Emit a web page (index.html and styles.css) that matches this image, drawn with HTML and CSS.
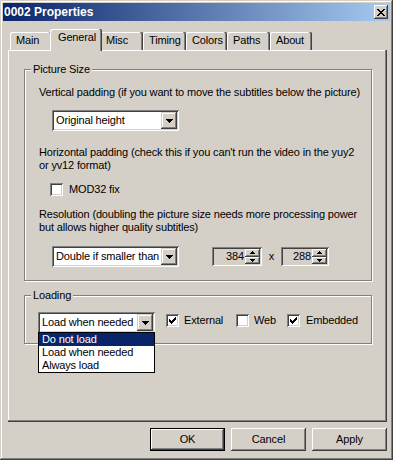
FILE: index.html
```html
<!DOCTYPE html>
<html>
<head>
<meta charset="utf-8">
<title>0002 Properties</title>
<link rel="stylesheet" href="styles.css">
</head>
<body>
<div class="window">
  <div class="titlebar">
    <span class="title">0002 Properties</span>
    <span class="close"><svg width="8" height="7" viewBox="0 0 8 7"><path fill="#000" d="M0 0h2v1h-2zM6 0h2v1h-2zM1 1h2v1h-2zM5 1h2v1h-2zM2 2h4v1h-4zM3 3h2v1h-2zM2 4h4v1h-4zM1 5h2v1h-2zM5 5h2v1h-2zM0 6h2v1h-2zM6 6h2v1h-2z"/></svg></span>
  </div>
  <div class="body">
    <div class="tabs">
      <div class="tab t-main">Main</div>
      <div class="tab t-general active">General</div>
      <div class="tab t-misc">Misc</div>
      <div class="tab t-timing">Timing</div>
      <div class="tab t-colors">Colors</div>
      <div class="tab t-paths">Paths</div>
      <div class="tab t-about">About</div>
    </div>
    <div class="panel">
      <fieldset class="group group-size">
        <legend>Picture Size</legend>
        <p class="label first">Vertical padding (if you want to move the subtitles below the picture)</p>
        <div class="combo combo-wide combo-vpad">
          <span class="combo-text">Original height</span>
          <span class="combo-btn"><svg width="7" height="4" viewBox="0 0 7 4"><path fill="#000" d="M0 0h7v1h-1v1h-1v1h-1v1h-1v-1h-1v-1h-1v-1h-1z"/></svg></span>
        </div>
        <p class="label para">Horizontal padding (check this if you can't run the video in the yuy2<br>or yv12 format)</p>
        <label class="check check-mod"><span class="box"></span><span>MOD32 fix</span></label>
        <p class="label para-res">Resolution (doubling the picture size needs more processing power<br>but allows higher quality subtitles)</p>
        <div class="res-row">
          <div class="combo combo-wide">
            <span class="combo-text">Double if smaller than</span>
            <span class="combo-btn"><svg width="7" height="4" viewBox="0 0 7 4"><path fill="#000" d="M0 0h7v1h-1v1h-1v1h-1v1h-1v-1h-1v-1h-1v-1h-1z"/></svg></span>
          </div>
          <div class="spin spin-w">
            <span class="spin-val">384</span>
            <span class="spin-btns">
              <span class="sb"><svg width="5" height="3" viewBox="0 0 5 3"><path fill="#000" d="M2 0h1v1h1v1h1v1h-5v-1h1v-1h1z"/></svg></span>
              <span class="sb"><svg width="5" height="3" viewBox="0 0 5 3"><path fill="#000" d="M0 0h5v1h-1v1h-1v1h-1v-1h-1v-1h-1z"/></svg></span>
            </span>
          </div>
          <span class="times">x</span>
          <div class="spin spin-h">
            <span class="spin-val">288</span>
            <span class="spin-btns">
              <span class="sb"><svg width="5" height="3" viewBox="0 0 5 3"><path fill="#000" d="M2 0h1v1h1v1h1v1h-5v-1h1v-1h1z"/></svg></span>
              <span class="sb"><svg width="5" height="3" viewBox="0 0 5 3"><path fill="#000" d="M0 0h5v1h-1v1h-1v1h-1v-1h-1v-1h-1z"/></svg></span>
            </span>
          </div>
        </div>
      </fieldset>
      <fieldset class="group group-load">
        <legend>Loading</legend>
        <div class="load-row">
          <div class="combo-wrap">
            <div class="combo combo-load">
              <span class="combo-text">Load when needed</span>
              <span class="combo-btn"><svg width="7" height="4" viewBox="0 0 7 4"><path fill="#000" d="M0 0h7v1h-1v1h-1v1h-1v1h-1v-1h-1v-1h-1v-1h-1z"/></svg></span>
            </div>
            <ul class="droplist">
              <li class="selected">Do not load</li>
              <li>Load when needed</li>
              <li>Always load</li>
            </ul>
          </div>
          <label class="check check-ext"><span class="box"><svg width="7" height="7" viewBox="0 0 7 7"><path fill="#000" d="M0 2h1v1h1v1h1v-1h1v-1h1v-1h1v-1h1v3h-1v1h-1v1h-1v1h-1v1h-1v-1h-1v-1h-1z"/></svg></span><span>External</span></label>
          <label class="check check-web"><span class="box"></span><span>Web</span></label>
          <label class="check check-emb"><span class="box"><svg width="7" height="7" viewBox="0 0 7 7"><path fill="#000" d="M0 2h1v1h1v1h1v-1h1v-1h1v-1h1v-1h1v3h-1v1h-1v1h-1v1h-1v1h-1v-1h-1v-1h-1z"/></svg></span><span>Embedded</span></label>
        </div>
      </fieldset>
    </div>
    <div class="buttons">
      <div class="btn default">OK</div>
      <div class="btn">Cancel</div>
      <div class="btn">Apply</div>
    </div>
  </div>
</div>
</body>
</html>
```
FILE: styles.css
```css
* { box-sizing: border-box; }

body {
  margin: 0;
  background: #d4d0c8;
  font: 11px/13px "Liberation Sans", Arial, sans-serif;
  letter-spacing: -0.15px;
  color: #000;
}

.window {
  width: 393px;
  height: 460px;
  padding: 3px;
  background: #d4d0c8;
  box-shadow: inset -1px -1px #404040, inset 1px 1px #d4d0c8, inset -2px -2px #808080, inset 2px 2px #fff;
}

.titlebar {
  height: 18px;
  display: flex;
  align-items: center;
  justify-content: space-between;
  padding: 0 2px 0 1px;
  background: linear-gradient(90deg, #0a246a, #a6caf0);
  color: #fff;
  font-weight: bold;
  font-size: 12px;
  letter-spacing: 0;
}

.close {
  width: 14px;
  height: 14px;
  background: #d4d0c8;
  display: flex;
  align-items: center;
  justify-content: center;
  box-shadow: inset -1px -1px #404040, inset 1px 1px #fff, inset -2px -2px #808080;
}

.body {
  margin: 8px 3px 0 5px;
}

.tabs {
  display: flex;
  align-items: flex-end;
  height: 21px;
  padding-left: 2px;
}

.tab {
  height: 18px;
  padding: 2px 0 0 6px;
  white-space: nowrap;
  background: #d4d0c8;
  border-radius: 2px 2px 0 0;
  box-shadow: inset -1px 0 #404040, inset -2px 0 #808080, inset 1px 1px #fff;
}

.tab.active {
  height: 22px;
  margin: 0 -2px -1px;
  padding-left: 8px;
  position: relative;
  z-index: 1;
}

.t-main { width: 42px; }
.t-general { width: 52px; }
.t-misc { width: 43px; }
.t-timing { width: 43px; }
.t-colors { width: 41px; }
.t-paths { width: 43px; }
.t-about { width: 42px; }

.panel {
  height: 372px;
  padding: 13px 15px 0 16px;
  box-shadow: inset -1px -1px #404040, inset -2px -2px #808080, inset 1px 1px #fff;
}

.group {
  margin: 0;
  padding: 0 0 13px;
  min-width: 0;
  border: 1px solid #808080;
  box-shadow: inset 1px 1px #fff, 1px 1px #fff;
}

.group legend {
  padding: 0 2px;
  margin-left: 6px;
  line-height: 13px;
  background: #d4d0c8;
}

.group-load {
  margin-top: 8px;
  padding-bottom: 10px;
}

.label {
  margin: 0 0 0 14px;
  white-space: nowrap;
}

.label.first { margin-top: 10px; }
.label.para { margin-top: 15px; }
.label.para-res { margin-top: 12px; }

.combo {
  display: flex;
  height: 21px;
  padding: 2px;
  background: #fff;
  box-shadow: inset 1px 1px #808080, inset -1px -1px #fff, inset 2px 2px #404040, inset -2px -2px #d4d0c8;
}

.combo-wide { width: 127px; }
.combo-vpad { margin: 11px 0 0 27px; }
.combo-load { width: 117px; }

.combo-text {
  flex: 1;
  padding-left: 2px;
  line-height: 17px;
  white-space: nowrap;
  overflow: hidden;
}

.combo-btn {
  width: 16px;
  height: 17px;
  background: #d4d0c8;
  display: flex;
  align-items: center;
  justify-content: center;
  box-shadow: inset -1px -1px #404040, inset 1px 1px #d4d0c8, inset -2px -2px #808080, inset 2px 2px #fff;
}

.check {
  display: flex;
  align-items: center;
  gap: 6px;
  height: 13px;
  white-space: nowrap;
}

.check-mod { margin: 11px 0 0 25px; }

.box {
  width: 13px;
  height: 13px;
  background: #fff;
  display: flex;
  align-items: center;
  justify-content: center;
  box-shadow: inset 1px 1px #808080, inset -1px -1px #fff, inset 2px 2px #404040, inset -2px -2px #d4d0c8;
}

.res-row {
  display: flex;
  align-items: center;
  height: 21px;
  margin: 12px 0 0 27px;
}

.spin {
  display: flex;
  height: 19px;
  padding: 2px;
  background: #d4d0c8;
  box-shadow: inset 1px 1px #808080, inset -1px -1px #fff, inset 2px 2px #404040, inset -2px -2px #d4d0c8;
}

.spin-w { width: 50px; margin-left: 33px; }
.spin-h { width: 48px; }

.spin-val {
  flex: 1;
  text-align: right;
  line-height: 15px;
  padding-right: 1px;
}

.spin-btns {
  width: 15px;
  display: flex;
  flex-direction: column;
}

.sb {
  flex: 1;
  display: flex;
  align-items: center;
  justify-content: center;
  background: #d4d0c8;
  box-shadow: inset -1px -1px #404040, inset 1px 1px #fff, inset -2px -2px #808080;
}

.times {
  width: 19px;
  text-align: center;
}

.load-row {
  display: flex;
  align-items: flex-start;
  height: 21px;
  margin: 10px 0 0 13px;
}

.combo-wrap {
  position: relative;
}

.droplist {
  position: absolute;
  left: 0;
  top: 20px;
  z-index: 2;
  width: 117px;
  margin: 0;
  padding: 0;
  list-style: none;
  background: #fff;
  border: 1px solid #000;
}

.droplist li {
  line-height: 13px;
  padding-left: 3px;
  white-space: nowrap;
}

.droplist li.selected {
  background: #0a246a;
  color: #fff;
}

.check-ext { margin: 2px 0 0 11px; width: 70px; gap: 5px; }
.check-web { margin-top: 2px; width: 51px; gap: 5px; }
.check-emb { margin-top: 2px; gap: 6px; }

.buttons {
  display: flex;
  justify-content: flex-end;
  gap: 6px;
  margin-top: 6px;
}

.btn {
  width: 75px;
  height: 23px;
  line-height: 23px;
  text-align: center;
  background: #d4d0c8;
  box-shadow: inset -1px -1px #404040, inset 1px 1px #fff, inset -2px -2px #808080, inset 2px 2px #d4d0c8;
}

.btn.default {
  border: 1px solid #000;
  line-height: 21px;
}
```
